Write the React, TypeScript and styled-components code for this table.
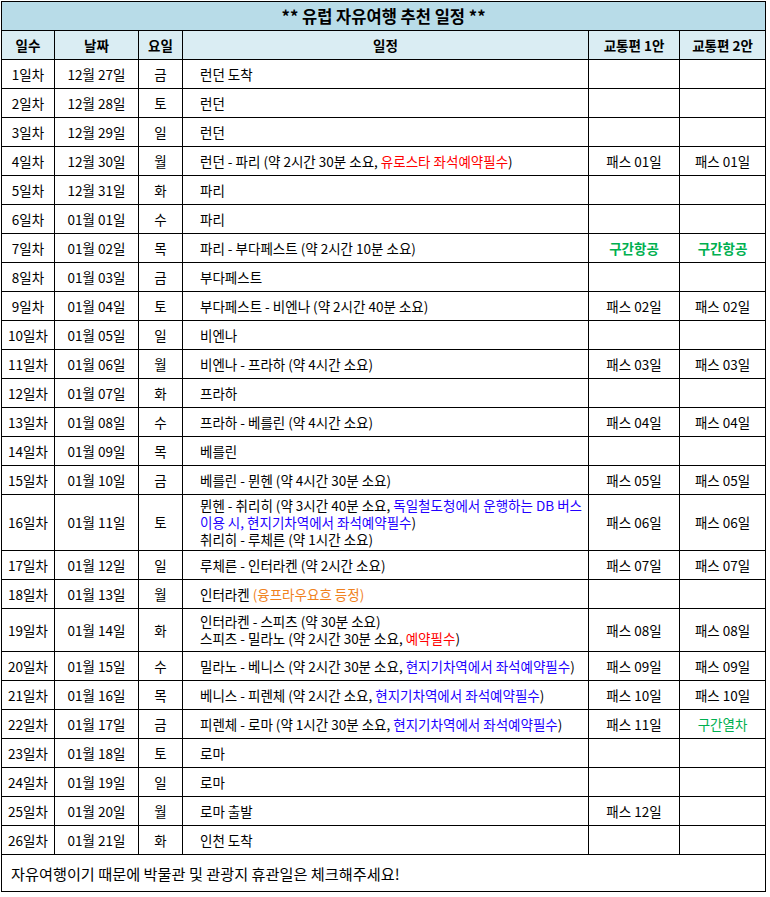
import styled, { createGlobalStyle } from "styled-components";

const Global = createGlobalStyle`
  html, body {
    margin: 0;
    padding: 0;
    background: #fff;
  }
  body {
    font-family: "Noto Sans CJK KR", "Noto Sans", sans-serif;
    font-size: 13.5px;
    color: #000;
  }
`;

const Page = styled.div`
  padding: 1px 0 0 1px;
  width: 770px;
  overflow: hidden;
`;

const Table = styled.table`
  border-collapse: collapse;
  table-layout: fixed;
  width: 764px;
`;

const TitleCell = styled.th`
  height: 28px;
  padding: 0;
  border: 1px solid #000;
  background: #b8dce8;
  font-size: 16.5px;
  font-weight: 700;
  text-align: center;
`;

const HeadCell = styled.th`
  height: 28px;
  padding: 0;
  border: 1px solid #000;
  background: #daedf3;
  font-size: 13.5px;
  font-weight: 700;
  text-align: center;
`;

const Row = styled.tr<{ $h?: number }>`
  height: ${(p) => p.$h ?? 29}px;
`;

const Cell = styled.td<{ $left?: boolean }>`
  padding: ${(p) => (p.$left ? "0 1px 0 17px" : "0")};
  border: 1px solid #000;
  line-height: 17px;
  text-align: ${(p) => (p.$left ? "left" : "center")};
  vertical-align: middle;
  white-space: ${(p) => (p.$left ? "normal" : "nowrap")};
  word-break: keep-all;
`;

const Note = styled.td`
  height: 36px;
  padding: 0 9px;
  border: 1px solid #000;
  font-size: 15.2px;
`;

const Red = styled.span`
  color: #ff0000;
`;
const Blue = styled.span`
  color: #2200ff;
`;
const Orange = styled.span`
  color: #f0821e;
`;
const Green = styled.span<{ $bold?: boolean }>`
  color: #00b050;
  font-weight: ${(p) => (p.$bold ? 700 : 400)};
`;

type Day = {
  d: string;
  date: string;
  w: string;
  plan: React.ReactNode;
  t1?: React.ReactNode;
  t2?: React.ReactNode;
  h?: number;
};

const days: Day[] = [
  { d: "1일차", date: "12월 27일", w: "금", plan: "런던 도착" },
  { d: "2일차", date: "12월 28일", w: "토", plan: "런던" },
  { d: "3일차", date: "12월 29일", w: "일", plan: "런던" },
  {
    d: "4일차", date: "12월 30일", w: "월",
    plan: <>런던 - 파리 (약 2시간 30분 소요, <Red>유로스타 좌석예약필수</Red>)</>,
    t1: "패스 01일", t2: "패스 01일",
  },
  { d: "5일차", date: "12월 31일", w: "화", plan: "파리" },
  { d: "6일차", date: "01월 01일", w: "수", plan: "파리" },
  {
    d: "7일차", date: "01월 02일", w: "목",
    plan: "파리 - 부다페스트 (약 2시간 10분 소요)",
    t1: <Green $bold>구간항공</Green>, t2: <Green $bold>구간항공</Green>,
  },
  { d: "8일차", date: "01월 03일", w: "금", plan: "부다페스트" },
  {
    d: "9일차", date: "01월 04일", w: "토",
    plan: "부다페스트 - 비엔나 (약 2시간 40분 소요)",
    t1: "패스 02일", t2: "패스 02일",
  },
  { d: "10일차", date: "01월 05일", w: "일", plan: "비엔나" },
  {
    d: "11일차", date: "01월 06일", w: "월",
    plan: "비엔나 - 프라하 (약 4시간 소요)",
    t1: "패스 03일", t2: "패스 03일",
  },
  { d: "12일차", date: "01월 07일", w: "화", plan: "프라하" },
  {
    d: "13일차", date: "01월 08일", w: "수",
    plan: "프라하 - 베를린 (약 4시간 소요)",
    t1: "패스 04일", t2: "패스 04일",
  },
  { d: "14일차", date: "01월 09일", w: "목", plan: "베를린" },
  {
    d: "15일차", date: "01월 10일", w: "금",
    plan: "베를린 - 뮌헨 (약 4시간 30분 소요)",
    t1: "패스 05일", t2: "패스 05일",
  },
  {
    d: "16일차", date: "01월 11일", w: "토", h: 56,
    plan: (
      <>
        뮌헨 - 취리히 (약 3시간 40분 소요, <Blue>독일철도청에서 운행하는 DB 버스 이용 시, 현지기차역에서 좌석예약필수</Blue>)
        <br />
        취리히 - 루체른 (약 1시간 소요)
      </>
    ),
    t1: "패스 06일", t2: "패스 06일",
  },
  {
    d: "17일차", date: "01월 12일", w: "일",
    plan: "루체른 - 인터라켄 (약 2시간 소요)",
    t1: "패스 07일", t2: "패스 07일",
  },
  {
    d: "18일차", date: "01월 13일", w: "월",
    plan: <>인터라켄 <Orange>(융프라우요흐 등정)</Orange></>,
  },
  {
    d: "19일차", date: "01월 14일", w: "화", h: 43,
    plan: (
      <>
        인터라켄 - 스피츠 (약 30분 소요)
        <br />
        스피츠 - 밀라노 (약 2시간 30분 소요, <Red>예약필수</Red>)
      </>
    ),
    t1: "패스 08일", t2: "패스 08일",
  },
  {
    d: "20일차", date: "01월 15일", w: "수",
    plan: <>밀라노 - 베니스 (약 2시간 30분 소요, <Blue>현지기차역에서 좌석예약필수</Blue>)</>,
    t1: "패스 09일", t2: "패스 09일",
  },
  {
    d: "21일차", date: "01월 16일", w: "목",
    plan: <>베니스 - 피렌체 (약 2시간 소요, <Blue>현지기차역에서 좌석예약필수</Blue>)</>,
    t1: "패스 10일", t2: "패스 10일",
  },
  {
    d: "22일차", date: "01월 17일", w: "금",
    plan: <>피렌체 - 로마 (약 1시간 30분 소요, <Blue>현지기차역에서 좌석예약필수</Blue>)</>,
    t1: "패스 11일", t2: <Green>구간열차</Green>,
  },
  { d: "23일차", date: "01월 18일", w: "토", plan: "로마" },
  { d: "24일차", date: "01월 19일", w: "일", plan: "로마" },
  { d: "25일차", date: "01월 20일", w: "월", plan: "로마 출발", t1: "패스 12일" },
  { d: "26일차", date: "01월 21일", w: "화", plan: "인천 도착" },
];

const App = () => {
  return (
    <Page>
      <Global />
      <Table>
        <colgroup>
          <col style={{ width: 53 }} />
          <col style={{ width: 84 }} />
          <col style={{ width: 44 }} />
          <col style={{ width: 406 }} />
          <col style={{ width: 91 }} />
          <col style={{ width: 86 }} />
        </colgroup>
        <thead>
          <tr>
            <TitleCell colSpan={6}>** 유럽 자유여행 추천 일정 **</TitleCell>
          </tr>
          <tr>
            <HeadCell>일수</HeadCell>
            <HeadCell>날짜</HeadCell>
            <HeadCell>요일</HeadCell>
            <HeadCell>일정</HeadCell>
            <HeadCell>교통편 1안</HeadCell>
            <HeadCell>교통편 2안</HeadCell>
          </tr>
        </thead>
        <tbody>
          {days.map((r) => (
            <Row key={r.d} $h={r.h}>
              <Cell>{r.d}</Cell>
              <Cell>{r.date}</Cell>
              <Cell>{r.w}</Cell>
              <Cell $left>{r.plan}</Cell>
              <Cell>{r.t1}</Cell>
              <Cell>{r.t2}</Cell>
            </Row>
          ))}
          <tr>
            <Note colSpan={6}>자유여행이기 때문에 박물관 및 관광지 휴관일은 체크해주세요!</Note>
          </tr>
        </tbody>
      </Table>
    </Page>
  );
};

export default App;
